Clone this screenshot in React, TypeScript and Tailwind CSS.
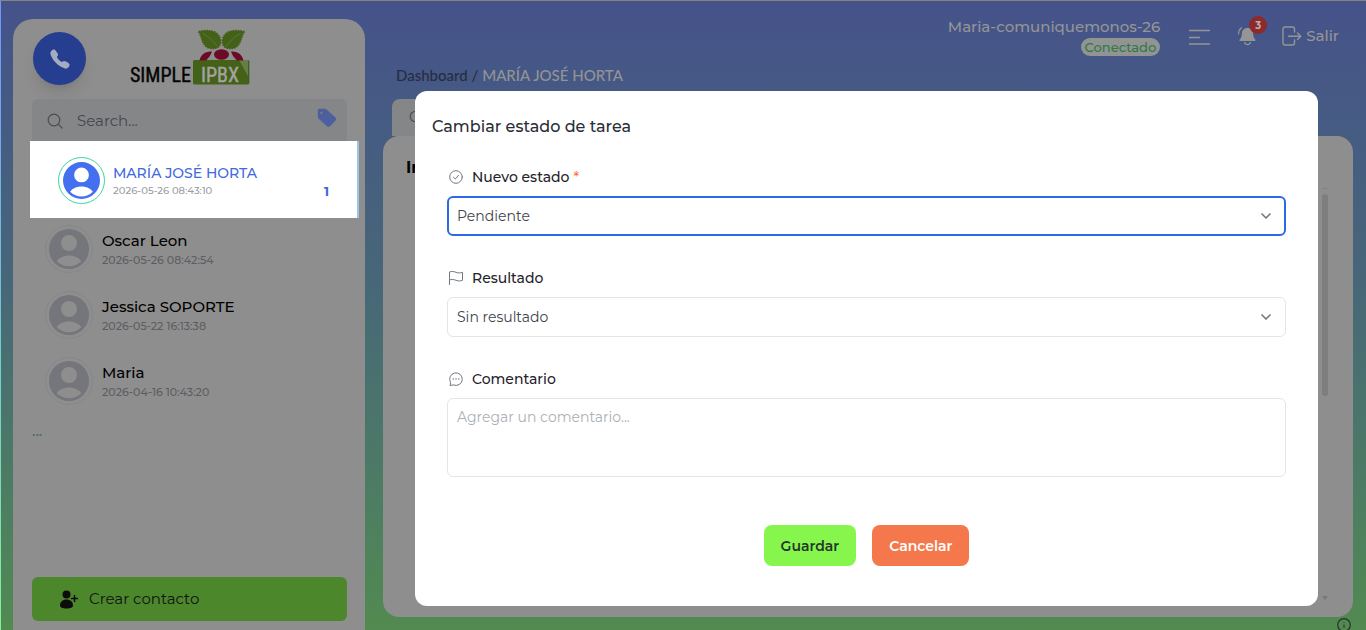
import React, { useState } from 'react';
import { ChevronDown } from 'lucide-react';
import { IoCall } from 'react-icons/io5';

interface Contact {
  name: string;
  date: string;
}

const contacts: Contact[] = [
  { name: 'Oscar Leon', date: '2026-05-26 08:42:54' },
  { name: 'Jessica SOPORTE', date: '2026-05-22 16:13:38' },
  { name: 'Maria', date: '2026-04-16 10:43:20' },
];

const UserIcon = ({ className }: { className: string }) => (
  <svg viewBox="0 0 40 40" className={className} fill="currentColor" fillRule="evenodd" aria-hidden="true">
    <path d="M20 0a20 20 0 1 1 0 40 20 20 0 0 1 0-40zm0 6a8 8 0 1 0 0 16 8 8 0 0 0 0-16zm0 20.500c-5.500 0-10 2.300-12.300 5.700a17.300 17.300 0 0 0 24.600 0C30 28.800 25.500 26.500 20 26.500z" />
  </svg>
);

const Leaf = () => (
  <>
    <path
      d="M68.500 2.500C76 .8 84 1.500 87 4.500c4 3.500 4.500 8.500 2.500 12.500-3.500 3.500-10.500 3.500-14 0-4-4-3.500-9-7-14.500z"
      fill="#446118"
      stroke="#446118"
      strokeWidth="1.600"
      strokeDasharray="1.600 1"
    />
    <path d="M72.500 4.500c5.500 2.500 9.500 6.500 14.500 12.500" stroke="#6f7d55" strokeWidth=".6" fill="none" />
  </>
);

const Logo = () => (
  <svg width="122" height="58" viewBox="0 0 122 58" role="img" aria-label="Simple IPBX">
    <rect x="63" y="31" width="56" height="24.500" rx="1.500" fill="#446118" />
    <path d="M109 31h9.500v17z" fill="#7f8f66" opacity=".6" />
    <path d="M118.800 31.500v23" stroke="#2c5c2a" strokeWidth="1" />
    {/* berries */}
    <ellipse cx="91.500" cy="25.500" rx="7.500" ry="5.200" fill="#6b0b25" />
    <path d="M69.500 31.500c1-5.500 5.500-9.500 12.500-9-1 3.500-3.500 6.500-6 9zM113.500 31.500c-1-5.500-5.500-9.500-12.500-9 1 3.500 3.500 6.500 6 9z" fill="#6b0b25" />
    {/* leaves */}
    <Leaf />
    <g transform="translate(183 0) scale(-1 1)">
      <Leaf />
    </g>
    <text x="0" y="53" className="font-['Roboto_Condensed','Liberation_Sans_Narrow',sans-serif] text-[20px]" fill="#050505" stroke="#050505" strokeWidth=".4">SIMPLE</text>
    <text x="71" y="53" className="font-['Roboto_Condensed','Liberation_Sans_Narrow',sans-serif] text-[20px]" fill="#a3a3a3" stroke="#a3a3a3" strokeWidth=".4">IPBX</text>
  </svg>
);

const SearchIcon = () => (
  <svg width="16" height="16" viewBox="0 0 16 16" fill="none" stroke="#4b4d50" strokeWidth="1.200" strokeLinecap="round" aria-hidden="true">
    <circle cx="7" cy="7" r="5.800" />
    <path d="M11.200 11.200l3.800 3.800" />
  </svg>
);

const TagIcon = () => (
  <svg width="20" height="20" viewBox="0 0 20 20" fill="#4d5f9f" fillRule="evenodd" aria-hidden="true">
    <path d="M2.500.8h5c.8 0 1.500.3 2.100.8l8.600 7.600c1.100 1 1.100 2.500.1 3.600l-5 5.200c-1 1-2.500 1-3.600.1L1.700 10.700A3 3 0 0 1 .8 8.500v-6C.8 1.500 1.500.8 2.500.8zM4.400 3.700a1 1 0 1 0 0 2 1 1 0 0 0 0-2z" />
  </svg>
);

const AddUserIcon = () => (
  <svg width="19" height="19" viewBox="0 0 19 19" fill="#0c0c0c" aria-hidden="true">
    <circle cx="7.500" cy="4.500" r="4" />
    <path d="M1 15.500C1 12 3.500 9.500 7.500 9.500s6.500 2.500 6.500 6c0 2-2.500 3-6.500 3s-6.500-1-6.500-3z" />
    <path d="M15.500 5.500v6M12.500 8.500h6" stroke="#0c0c0c" strokeWidth="1.500" strokeLinecap="round" />
  </svg>
);

const BellIcon = () => (
  <svg width="20" height="20" viewBox="0 0 20 20" aria-hidden="true">
    <path d="M10.500 2c-3.600 0-5.600 2.500-5.600 5.600 0 3-.8 4.400-1.900 5.600-.9 1-.6 1.900.6 1.900h13.800c1.200 0 1.500-.9.600-1.900-1.100-1.200-1.900-2.600-1.900-5.600C16.100 4.500 14.100 2 10.500 2z" fill="#959595" />
    <path d="M7.500 16c.3 1.800 1.500 2.600 3 2.600s2.700-.8 3-2.600" fill="none" stroke="#959595" strokeWidth="1.300" />
    <path d="M1.500 8c.1-2.700 1.200-4.900 3-6.200" fill="none" stroke="#959595" strokeWidth="1.200" strokeLinecap="round" />
  </svg>
);

const ExitIcon = () => (
  <svg width="20" height="20" viewBox="0 0 20 20" fill="none" stroke="#959595" strokeWidth="1.400" strokeLinecap="round" strokeLinejoin="round" aria-hidden="true">
    <path d="M12.500 6V3a2 2 0 0 0-2-2H3a2 2 0 0 0-2 2v14a2 2 0 0 0 2 2h7.500a2 2 0 0 0 2-2v-3M6.500 10.300h12M15.500 7l3.300 3.300-3.300 3.300" />
  </svg>
);

const iconProps = {
  width: 16,
  height: 16,
  viewBox: '0 0 16 16',
  fill: 'none',
  stroke: '#73777f',
  strokeLinecap: 'round' as const,
  strokeLinejoin: 'round' as const,
  'aria-hidden': true,
};

const CheckIcon = () => (
  <svg {...iconProps}>
    <circle cx="8" cy="8" r="6.300" />
    <path d="M5.500 8.300l1.800 1.700 3.200-3.700" />
  </svg>
);

const FlagIcon = () => (
  <svg {...iconProps}>
    <path d="M1.500 14.500V2c2-.9 3.800-.7 6.500.3 2.500.9 4 .8 6.500 0v8c-2.500.8-4 .9-6.500 0-2.700-1-4.500-1.200-6.500-.3" />
  </svg>
);

const CommentIcon = () => (
  <svg {...iconProps}>
    <path d="M2.200 14.300l.3-3A6.300 6.300 0 1 1 5.500 14z" />
    <path d="M5.200 8h.1M8 8h.1M10.800 8h.1" strokeWidth="1.400" />
  </svg>
);

const Sidebar = () => (
  <aside className="flex w-[352px] shrink-0 flex-col rounded-t-[20px] bg-[#8e8e8e]">
    <div className="flex h-20 items-start px-5 pt-2.5">
      <button
        type="button"
        aria-label="Llamar"
        className="mt-[3px] flex size-[53px] items-center justify-center rounded-full bg-[#263e8f] shadow-lg"
      >
        <IoCall className="size-[22px] text-[#a5abc0]" />
      </button>
      <div className="ml-11">
        <Logo />
      </div>
    </div>

    <div className="ml-[19px] mr-[18px] flex h-[42px] items-center rounded-t-md bg-[#848688] pl-[15px] pr-2.5 pt-0.5">
      <SearchIcon />
      <input
        type="text"
        aria-label="Search"
        placeholder="Search..."
        className="ml-3.5 w-0 flex-1 bg-transparent text-[15px] text-[#44474c] outline-none placeholder:text-[#44474c]"
      />
      <button type="button" aria-label="Etiquetas" className="mb-1.5">
        <TagIcon />
      </button>
    </div>

    {/* Selected contact */}
    <div className="ml-[17px] mr-1.5 flex h-[77px] items-center border-r-2 border-[#9cc4e8] bg-white px-7 pt-0.5">
      <div className="flex size-[47px] items-center justify-center rounded-full border border-[#34d9a0]">
        <UserIcon className="size-[37px] text-[#4470f0]" />
      </div>
      <div className="ml-2 flex-1 font-medium">
        <p className="text-sm leading-5 text-[#4168e0]">MARÍA JOSÉ HORTA</p>
        <p className="text-[10px] leading-4 text-[#9a9da5]">2026-05-26 08:43:10</p>
      </div>
      <span className="mt-5 text-[13px] font-bold leading-4 text-[#4168e0]">1</span>
    </div>

    <ul className="-mt-0.5">
      {contacts.map((contact) => (
        <li key={contact.name} className="flex h-[66px] items-center pl-8">
          <div className="flex size-12 items-center justify-center rounded-full border border-[#878787]">
            <UserIcon className="size-10 text-[#75767b]" />
          </div>
          <div className="ml-[9px] mt-0.5 font-medium">
            <p className="text-[15px] leading-5 text-black">{contact.name}</p>
            <p className="text-[11px] leading-[18px] text-[#5c5e63]">{contact.date}</p>
          </div>
        </li>
      ))}
    </ul>
    <p className="ml-[19px] mt-1.5 text-[15px] font-medium text-[#4d6e5c]">...</p>

    <button
      type="button"
      className="mb-[9px] ml-[19px] mr-[18px] mt-auto flex h-11 items-center gap-[11px] rounded-md bg-[#4c882b] pl-[27px] text-[15px] text-[#111]"
    >
      <AddUserIcon />
      Crear contacto
    </button>
  </aside>
);

const Header = () => (
  <header className="flex h-[66px] items-start justify-end pr-3.5 text-[15px] font-medium text-[#959595]">
    <div className="flex flex-col items-end pt-[15px]">
      <span className="leading-[22px]">Maria-comuniquemonos-26</span>
      <span className="rounded-full bg-[#929494] px-1 text-[13px] leading-[18px] text-[#2e7a42]">Conectado</span>
    </div>
    <button type="button" aria-label="Menú" className="ml-[29px] mt-7">
      <svg width="21" height="16" viewBox="0 0 21 16" stroke="#959595" strokeWidth="1.500" aria-hidden="true">
        <path d="M0 1.500h21M0 8.500h11M0 15h21" />
      </svg>
    </button>
    <button type="button" aria-label="Notificaciones" className="relative ml-[27px] mt-[25px]">
      <BellIcon />
      <span className="absolute -top-2.5 left-3 flex size-[18px] items-center justify-center rounded-full bg-[#8e2a2a] text-[10px] font-bold text-[#b9b0b0]">
        3
      </span>
    </button>
    <a href="#salir" className="ml-[25px] mt-6 flex items-center gap-1">
      <ExitIcon />
      Salir
    </a>
  </header>
);

interface FieldProps {
  id: string;
  label: string;
  icon: React.ReactNode;
  required?: boolean;
  children: React.ReactNode;
}

const Field: React.FC<FieldProps> = ({ id, label, icon, required, children }) => (
  <div>
    <label htmlFor={id} className="mb-[9px] flex h-5 items-center gap-2 pl-px text-sm font-medium text-[#1f232b]">
      {icon}
      <span>
        {label}
        {required && <span className="ml-1 text-[#f4764a]">*</span>}
      </span>
    </label>
    <div className="relative">{children}</div>
  </div>
);

const TaskModal = () => {
  const [status, setStatus] = useState('pendiente');
  const [result, setResult] = useState('');
  const [comment, setComment] = useState('');

  return (
    <div className="fixed inset-0 flex items-start pl-[415px] pr-12 pt-[91px]">
      <div role="dialog" aria-labelledby="modal-title" className="w-full rounded-xl bg-white pb-10 text-[#3f434b]">
        <h2 id="modal-title" className="px-[17px] pt-6 text-base font-medium text-[#2a2e37]">
          Cambiar estado de tarea
        </h2>
        <form className="px-8 pt-7" onSubmit={(e) => e.preventDefault()}>
          <div className="flex flex-col gap-8">
            <Field id="status" label="Nuevo estado" icon={<CheckIcon />} required>
              <select
                id="status"
                value={status}
                onChange={(e) => setStatus(e.target.value)}
                className="block h-10 w-full appearance-none rounded-md border-2 border-[#2f68e6] bg-white px-2 text-sm outline-none"
              >
                <option value="pendiente">Pendiente</option>
              </select>
              <ChevronDown strokeWidth={2.5} className="pointer-events-none absolute right-3 top-3 size-4 text-[#73777f]" />
            </Field>
            <Field id="result" label="Resultado" icon={<FlagIcon />}>
              <select
                id="result"
                value={result}
                onChange={(e) => setResult(e.target.value)}
                className="block h-10 w-full appearance-none rounded-md border border-[#e5e5e9] bg-white px-[9px] text-sm outline-none"
              >
                <option value="">Sin resultado</option>
              </select>
              <ChevronDown strokeWidth={2.5} className="pointer-events-none absolute right-3 top-3 size-4 text-[#73777f]" />
            </Field>
            <Field id="comment" label="Comentario" icon={<CommentIcon />}>
              <textarea
                id="comment"
                value={comment}
                onChange={(e) => setComment(e.target.value)}
                placeholder="Agregar un comentario..."
                className="block h-[79px] w-full resize-none rounded-md border border-[#e5e5e9] px-[9px] py-2 text-sm leading-5 outline-none placeholder:text-[#adb0b6]"
              />
            </Field>
          </div>
          <div className="mt-12 flex justify-center gap-4 text-sm font-semibold">
            <button type="submit" className="h-[41px] rounded-lg bg-[#86f64d] px-[17px] text-[#27352a]">
              Guardar
            </button>
            <button type="button" className="h-[41px] rounded-lg bg-[#f4784b] px-[17px] text-white">
              Cancelar
            </button>
          </div>
        </form>
      </div>
    </div>
  );
};

const App: React.FC = () => {
  return (
    <div className="flex h-screen overflow-hidden border-t border-[#86847f] bg-linear-to-b from-[#45528a] via-[#476778] via-45% to-[#528a50] font-['Montserrat','Inter',sans-serif]">
      <div className="w-px shrink-0 bg-linear-to-b from-[#6f95fb] to-[#83ef9b]" />
      <div className="flex min-w-0 flex-1 gap-[18px] pl-3">
        <div className="flex pt-[18px]">
          <Sidebar />
        </div>

        <main className="flex min-w-0 flex-1 flex-col pb-[13px] pr-[13px]">
          <Header />
          <nav className="ml-[13px] h-8 font-['Lato',sans-serif] text-[15px] font-medium leading-4 text-[#252d42]">
            <a href="#dashboard">Dashboard</a> / <span className="text-[#929494]">MARÍA JOSÉ HORTA</span>
          </nav>
          <div className="ml-[9px] h-[37px] w-40 rounded-t-lg bg-[#848688] pl-[17px] pt-2 text-sm text-[#44474c]">C</div>
          <section className="flex flex-1 justify-between rounded-2xl bg-[#8e8e8e] pl-[23px] pr-[25px] pt-5">
            <h1 className="text-base font-bold text-black">In</h1>
            {/* Scrollbar */}
            <div className="flex w-1.5 flex-col items-center pt-8">
              <div className="h-px w-1.5 bg-[#828282]" />
              <div className="mt-[5px] h-[202px] w-1.5 rounded-full bg-[#7e7e7e]" />
              <svg width="6" height="6" viewBox="0 0 6 6" fill="#777" className="mb-4 mt-auto" aria-hidden="true">
                <path d="M0 1h6L3 5z" />
              </svg>
            </div>
          </section>
        </main>
      </div>

      <TaskModal />

      <button type="button" aria-label="Información" className="fixed -bottom-0.5 right-[15px] text-[#26332a]">
        <svg width="14" height="14" viewBox="0 0 14 14" fill="none" stroke="currentColor" aria-hidden="true">
          <circle cx="7" cy="7" r="6.300" strokeWidth="1.200" />
          <path d="M7 4v.8M7 6.500v3.500" />
        </svg>
      </button>
    </div>
  );
};

export default App;
